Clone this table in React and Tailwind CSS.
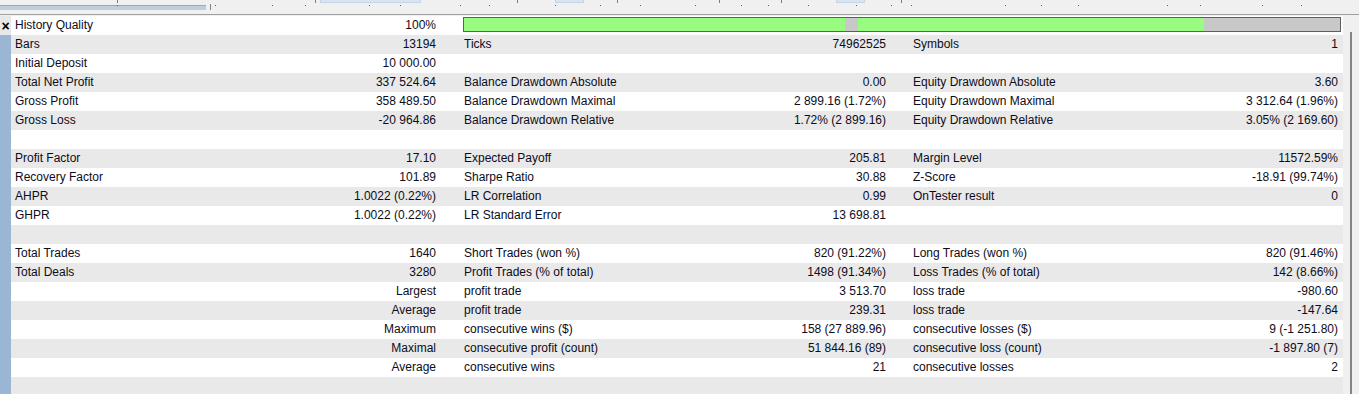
const rows = [
  ["History Quality", "100%", "bar"],
  ["Bars", "13194", "Ticks", "74962525", "Symbols", "1"],
  ["Initial Deposit", "10 000.00", "", "", "", ""],
  ["Total Net Profit", "337 524.64", "Balance Drawdown Absolute", "0.00", "Equity Drawdown Absolute", "3.60"],
  ["Gross Profit", "358 489.50", "Balance Drawdown Maximal", "2 899.16 (1.72%)", "Equity Drawdown Maximal", "3 312.64 (1.96%)"],
  ["Gross Loss", "-20 964.86", "Balance Drawdown Relative", "1.72% (2 899.16)", "Equity Drawdown Relative", "3.05% (2 169.60)"],
  ["", "", "", "", "", ""],
  ["Profit Factor", "17.10", "Expected Payoff", "205.81", "Margin Level", "11572.59%"],
  ["Recovery Factor", "101.89", "Sharpe Ratio", "30.88", "Z-Score", "-18.91 (99.74%)"],
  ["AHPR", "1.0022 (0.22%)", "LR Correlation", "0.99", "OnTester result", "0"],
  ["GHPR", "1.0022 (0.22%)", "LR Standard Error", "13 698.81", "", ""],
  ["", "", "", "", "", ""],
  ["Total Trades", "1640", "Short Trades (won %)", "820 (91.22%)", "Long Trades (won %)", "820 (91.46%)"],
  ["Total Deals", "3280", "Profit Trades (% of total)", "1498 (91.34%)", "Loss Trades (% of total)", "142 (8.66%)"],
  ["", "Largest", "profit trade", "3 513.70", "loss trade", "-980.60"],
  ["", "Average", "profit trade", "239.31", "loss trade", "-147.64"],
  ["", "Maximum", "consecutive wins ($)", "158 (27 889.96)", "consecutive losses ($)", "9 (-1 251.80)"],
  ["", "Maximal", "consecutive profit (count)", "51 844.16 (89)", "consecutive loss (count)", "-1 897.80 (7)"],
  ["", "Average", "consecutive wins", "21", "consecutive losses", "2"],
  ["", "", "", "", "", ""],
];

function Cell({ label, value, className }) {
  return (
    <div className={"flex justify-between " + className}>
      <span>{label}</span>
      <span>{value}</span>
    </div>
  );
}

function QualityBar() {
  return (
    <div className="flex h-[19px] w-[903px] items-start pl-[23px] pt-px">
      <div className="flex h-[15px] w-[878px] border border-[#5f5f5f] bg-[#c8c8c8]">
        <div className="w-[381px] bg-[#98fc80]" />
        <div className="w-[13px] bg-[#c8c8c8]" />
        <div className="w-[346px] bg-[#98fc80]" />
      </div>
    </div>
  );
}

function Ruler() {
  const dots = [117, 215, 272, 305, 369, 400, 460, 489, 555, 600, 640, 695, 741, 768, 808, 856, 891, 911, 1005, 1041, 1078, 1167, 1200, 1262, 1301];
  return (
    <div className="relative h-[15px] border-b border-[#a0a0a0] bg-[#f0f0f0]">
      <div className="absolute left-0 top-[5px] h-[5px] w-[206px] border-t border-[#9aa8b8] bg-[#c0cddb]" />
      <div className="absolute left-[210px] top-[4px] h-[6px] w-px bg-[#808080]" />
      <div className="absolute left-[320px] top-0 h-[3px] w-[101px] border border-t-0 border-[#c5d5e6] bg-[#d8e4f2]" />
      <div className="absolute left-[555px] top-0 h-[3px] w-[29px] border border-t-0 border-[#c5d5e6] bg-[#d8e4f2]" />
      <div className="absolute left-[836px] top-0 h-[3px] w-[29px] border border-t-0 border-[#c5d5e6] bg-[#d8e4f2]" />
      {[117, 315, 517, 617, 719, 781, 901].map((x) => (
        <div key={"t" + x} className="absolute top-0 h-[3px] w-px bg-[#808080]" style={{ left: x }} />
      ))}
      {dots.map((x) => (
        <div key={x} className="absolute top-[5px] h-px w-px bg-[#606060]" style={{ left: x }} />
      ))}
    </div>
  );
}

export default function App() {
  return (
    <div
      className="h-[394px] w-[1359px] overflow-hidden bg-[#f0f0f0] text-[12px] text-[#0c0c1a]"
      style={{ fontFamily: '"Liberation Sans", Arial, sans-serif' }}
    >
      <Ruler />
      <div className="mt-px flex">
        <div className="flex w-[11px] flex-col">
          <div className="flex h-[19px] items-center justify-center bg-[#e8e8e8] text-[14px] font-bold leading-none text-black">×</div>
          <div className="h-[400px] bg-[#9bb5d4]" />
        </div>
        <div className="flex w-[1332px] flex-col">
          {rows.map((r, i) => (
            <div
              key={i}
              className={"flex h-[19px] leading-[19px] " + (i % 2 ? "bg-[#e9e9e9]" : "bg-white")}
            >
              <Cell label={r[0]} value={r[1]} className="w-[429px] pl-[4px] pr-[4px]" />
              {r[2] === "bar" ? (
                <QualityBar />
              ) : (
                <>
                  <Cell label={r[2]} value={r[3]} className="w-[450px] pl-[24px] pr-[4px]" />
                  <Cell label={r[4]} value={r[5]} className="w-[453px] pl-[23px] pr-[5px]" />
                </>
              )}
            </div>
          ))}
        </div>
        <div className="flex w-[16px] justify-center pt-[16px]">
          <div className="h-[400px] w-[2px] bg-[#858585]" />
        </div>
      </div>
    </div>
  );
}
